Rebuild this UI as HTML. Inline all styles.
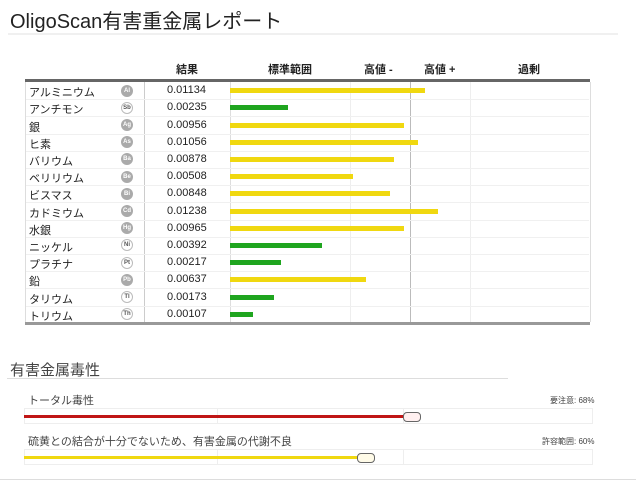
<!DOCTYPE html>
<html><head><meta charset="utf-8"><style>
body{margin:0;width:636px;height:481px;background:#fff;font-family:"Liberation Sans","Noto Sans CJK JP",sans-serif;color:#222;position:relative;overflow:hidden}
.a{position:absolute}
.t{position:absolute;white-space:nowrap}
.badge{position:absolute;width:12px;height:12px;border-radius:50%;font-size:6px;line-height:12px;text-align:center;left:121px;font-weight:bold}
.f{background:#aaa;color:#fff}
.o{border:1px solid #bbb;width:10px;height:10px;line-height:10px;color:#555;background:#fff}
.bar{position:absolute;left:230px;height:5px}
.y{background:#f0d810}.g{background:#1fa51f}
</style></head><body>
<div class="t" style="left:10px;top:5px;font-size:20px">OligoScan有害重金属レポート</div>
<div class="a" style="left:8px;top:33px;width:610px;height:2px;background:#f0f0f0"></div>
<div class="t" style="left:176px;top:61px;font-size:11px;font-weight:bold">結果</div>
<div class="t" style="left:268px;top:61px;font-size:11px;font-weight:bold">標準範囲</div>
<div class="t" style="left:364px;top:61px;font-size:11px;font-weight:bold">高値 -</div>
<div class="t" style="left:424px;top:61px;font-size:11px;font-weight:bold">高値 +</div>
<div class="t" style="left:518px;top:61px;font-size:11px;font-weight:bold">過剰</div>
<div class="a" style="left:25px;top:79px;width:565px;height:3px;background:#666"></div>
<div class="a" style="left:25px;top:82px;width:564px;height:240px;border-left:1px solid #ddd;border-right:1px solid #ddd"></div>
<div class="a" style="left:25px;top:322px;width:565px;height:3px;background:#999"></div>
<div class="a" style="left:144px;top:82px;width:1px;height:240px;background:#ccc"></div>
<div class="a" style="left:230px;top:82px;width:1px;height:240px;background:#ddd"></div>
<div class="a" style="left:350px;top:82px;width:1px;height:240px;background:#eee"></div>
<div class="a" style="left:410px;top:82px;width:1px;height:240px;background:#bbb"></div>
<div class="a" style="left:470px;top:82px;width:1px;height:240px;background:#eee"></div>
<div id="rows"></div>
<script>
var d=[["アルミニウム","Al",1,"0.01134",425,"y"],["アンチモン","Sb",0,"0.00235",288,"g"],["銀","Ag",1,"0.00956",404,"y"],["ヒ素","As",1,"0.01056",418,"y"],["バリウム","Ba",1,"0.00878",394,"y"],["ベリリウム","Be",1,"0.00508",353,"y"],["ビスマス","Bi",1,"0.00848",390,"y"],["カドミウム","Cd",1,"0.01238",438,"y"],["水銀","Hg",1,"0.00965",404,"y"],["ニッケル","Ni",0,"0.00392",322,"g"],["プラチナ","Pt",0,"0.00217",281,"g"],["鉛","Pb",1,"0.00637",366,"y"],["タリウム","Tl",0,"0.00173",274,"g"],["トリウム","Th",0,"0.00107",253,"g"]];
var h="";
d.forEach(function(r,i){var top=82+i*17.2;var c=top+8.6;
if(i>0)h+='<div class="a" style="left:26px;top:'+top+'px;width:563px;height:1px;background:#f0f0f0"></div>';
h+='<div class="t" style="left:29px;top:'+(c-6.5)+'px;font-size:11px">'+r[0]+'</div>';
h+='<div class="badge '+(r[2]?'f':'o')+'" style="top:'+(c-6)+'px">'+r[1]+'</div>';
h+='<div class="t" style="left:167px;top:'+(c-6.5)+'px;font-size:11px">'+r[3]+'</div>';
h+='<div class="bar '+r[5]+'" style="top:'+(c-2.5)+'px;width:'+(r[4]-230)+'px"></div>';});
document.getElementById("rows").innerHTML=h;
</script>
<div class="t" style="left:10px;top:359px;font-size:15px;color:#444">有害金属毒性</div>
<div class="a" style="left:7px;top:378px;width:501px;height:1px;background:#ddd"></div>
<div class="t" style="left:28px;top:392px;font-size:11px;color:#444">トータル毒性</div>
<div class="t" style="left:550px;top:395px;font-size:8px;color:#444">要注意: 68%</div>
<div class="a" style="left:24px;top:408px;width:569px;height:16px;border:1px solid #eee;box-sizing:border-box"></div>
<div class="a" style="left:217px;top:408px;width:1px;height:16px;background:#eee"></div>
<div class="a" style="left:403px;top:408px;width:1px;height:16px;background:#eee"></div>
<div class="a" style="left:24px;top:415px;width:382px;height:3px;background:#c01515"></div>
<div class="a" style="left:403px;top:412px;width:16px;height:8px;border:1px solid #666;border-radius:4px;background:#fff0f0"></div>
<div class="t" style="left:28px;top:433px;font-size:11px;color:#444">硫黄との結合が十分でないため、有害金属の代謝不良</div>
<div class="t" style="left:542px;top:436px;font-size:8px;color:#444">許容範囲: 60%</div>
<div class="a" style="left:24px;top:449px;width:569px;height:16px;border:1px solid #eee;box-sizing:border-box"></div>
<div class="a" style="left:217px;top:449px;width:1px;height:16px;background:#eee"></div>
<div class="a" style="left:403px;top:449px;width:1px;height:16px;background:#eee"></div>
<div class="a" style="left:24px;top:456px;width:336px;height:3px;background:#f0d810"></div>
<div class="a" style="left:357px;top:453px;width:16px;height:8px;border:1px solid #666;border-radius:4px;background:#fffbe8"></div>
<div class="a" style="left:0;top:479px;width:636px;height:1px;background:#ddd"></div>
</body></html>
